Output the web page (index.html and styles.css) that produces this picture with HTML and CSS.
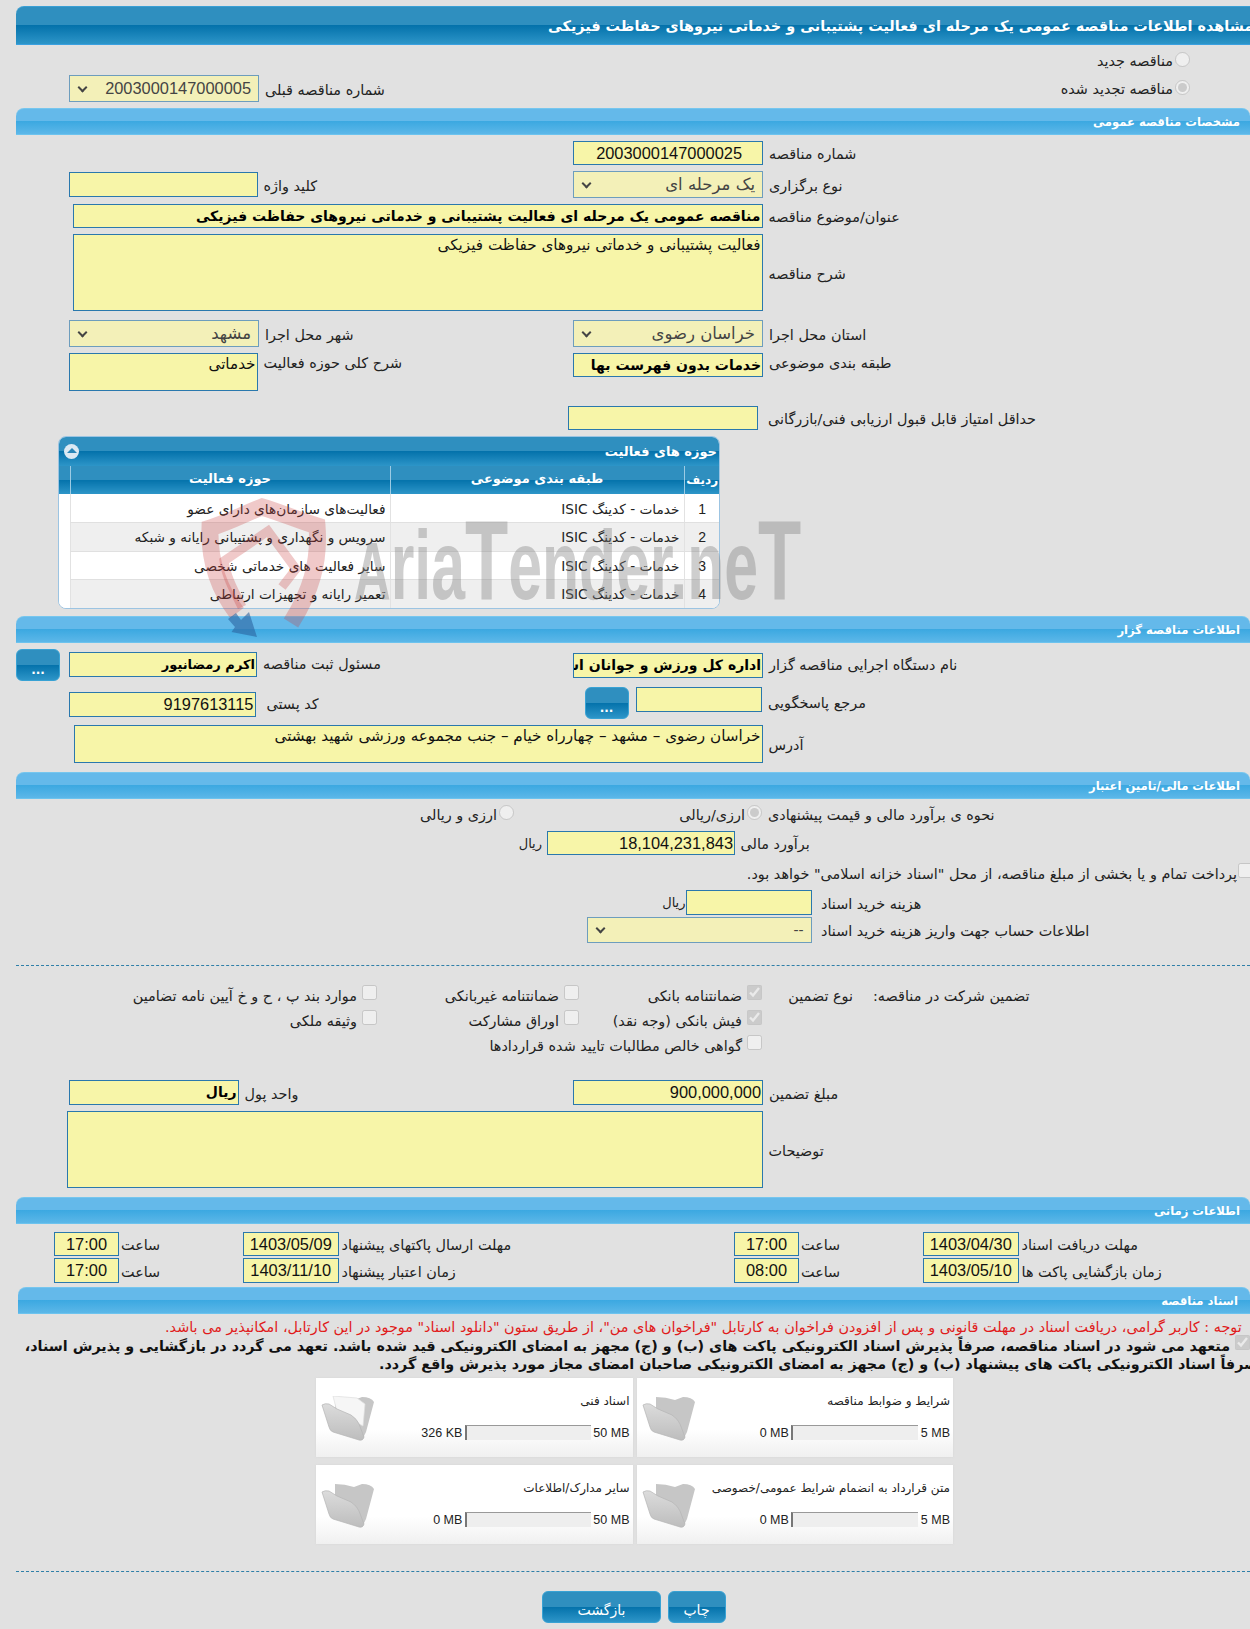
FILE: index.html
```html
<!DOCTYPE html>
<html lang="fa">
<head>
	<meta charset="UTF-8">
	<title>مشاهده اطلاعات مناقصه</title>
	<link rel="stylesheet" href="styles.css">
</head>
<body>
	<div class="titleBar"><span>مشاهده اطلاعات مناقصه عمومی یک مرحله ای فعالیت پشتیبانی و خدماتی نیروهای حفاظت فیزیکی</span></div>

	<div class="radioRow first"><span class="lbl">مناقصه جدید</span><input type="radio" disabled></div>
	<div class="radioRow second">
		<div class="half prev">
			<div class="sel w190 h27"><i class="arrow"></i><span class="num">2003000147000005</span></div>
			<span class="lbl">شماره مناقصه قبلی</span>
		</div>
		<div class="renew"><span class="lbl">مناقصه تجدید شده</span><input type="radio" checked disabled></div>
	</div>

	<!-- general -->
	<div class="bar"><span>مشخصات مناقصه عمومی</span></div>
	<div class="form">
		<div class="row">
			<div class="half"></div>
			<div class="half">
				<div class="fld num w190 h24 center">2003000147000025</div>
				<span class="lbl">شماره مناقصه</span>
			</div>
		</div>
		<div class="row">
			<div class="half">
				<div class="fld w188 h25"></div>
				<span class="lbl">کلید واژه</span>
			</div>
			<div class="half">
				<div class="sel w190 h27"><i class="arrow"></i><span>یک مرحله ای</span></div>
				<span class="lbl">نوع برگزاری</span>
			</div>
		</div>
		<div class="row wide">
			<div class="fld strong wTitle h24">مناقصه عمومی یک مرحله ای فعالیت پشتیبانی و خدماتی نیروهای حفاظت فیزیکی</div>
			<span class="lbl">عنوان/موضوع مناقصه</span>
		</div>
		<div class="row wide">
			<div class="fld area wTitle h77">فعالیت پشتیبانی و خدماتی نیروهای حفاظت فیزیکی</div>
			<span class="lbl">شرح مناقصه</span>
		</div>
		<div class="row gap9">
			<div class="half">
				<div class="sel w190 h27"><i class="arrow"></i><span>مشهد</span></div>
				<span class="lbl">شهر محل اجرا</span>
			</div>
			<div class="half">
				<div class="sel w190 h27"><i class="arrow"></i><span>خراسان رضوی</span></div>
				<span class="lbl">استان محل اجرا</span>
			</div>
		</div>
		<div class="row top">
			<div class="half">
				<div class="fld area w188 h38">خدماتی</div>
				<span class="lbl">شرح کلی حوزه فعالیت</span>
			</div>
			<div class="half">
				<div class="fld strong w190 h24">خدمات بدون فهرست بها</div>
				<span class="lbl">طبقه بندی موضوعی</span>
			</div>
		</div>
		<div class="row gap15 scoreRow">
			<div class="fld w190 h24"></div>
			<span class="lbl">حداقل امتیاز قابل قبول ارزیابی فنی/بازرگانی</span>
		</div>
	</div>

	<div class="panel">
		<div class="panelHead">
			<span class="toggle"><i></i></span>
			<span class="panelTitle">حوزه های فعالیت</span>
		</div>
		<table dir="rtl">
			<thead>
				<tr><th class="colNo">ردیف</th><th class="colCat">طبقه بندی موضوعی</th><th class="colAct">حوزه فعالیت</th><th class="colEnd"></th></tr>
			</thead>
			<tbody>
				<tr><td class="no">1</td><td>خدمات - کدینگ ISIC</td><td>فعالیت‌های سازمان‌های دارای عضو</td><td></td></tr>
				<tr class="alt"><td class="no">2</td><td>خدمات - کدینگ ISIC</td><td>سرویس و نگهداری و پشتیبانی رایانه و شبکه</td><td class="plain"></td></tr>
				<tr><td class="no">3</td><td>خدمات - کدینگ ISIC</td><td>سایر فعالیت های خدماتی شخصی</td><td></td></tr>
				<tr class="alt"><td class="no">4</td><td>خدمات - کدینگ ISIC</td><td>تعمیر رایانه و تجهیزات ارتباطی</td><td class="plain"></td></tr>
			</tbody>
		</table>
	</div>

	<!-- organiser -->
	<div class="bar sec2"><span>اطلاعات مناقصه گزار</span></div>
	<div class="form orgForm">
		<div class="row org">
			<div class="half">
				<button class="btn dots">...</button>
				<div class="fld strong short w188 h25">اکرم رمضانپور</div>
				<span class="lbl">مسئول ثبت مناقصه</span>
			</div>
			<div class="half">
				<div class="fld strong w190 h25">اداره کل ورزش و جوانان استان خراسان رضوی</div>
				<span class="lbl">نام دستگاه اجرایی مناقصه گزار</span>
			</div>
		</div>
		<div class="row org">
			<div class="half">
				<div class="fld num postal h25">9197613115</div>
				<span class="lbl postalLbl">کد پستی</span>
			</div>
			<div class="half answer">
				<button class="btn dots">...</button>
				<div class="fld wRef h25"></div>
				<span class="lbl">مرجع پاسخگویی</span>
			</div>
		</div>
		<div class="row addr">
			<div class="fld area wAddr h38">خراسان رضوی – مشهد – چهارراه خیام – جنب مجموعه ورزشی شهید بهشتی</div>
			<span class="lbl">آدرس</span>
		</div>
	</div>

	<!-- finance -->
	<div class="bar sec3"><span>اطلاعات مالی/تامین اعتبار</span></div>
	<div class="optRow">
		<div class="opt optB"><span class="lbl">ارزی و ریالی</span><input type="radio" disabled></div>
		<div class="opt optA"><span class="lbl">ارزی/ریالی</span><input type="radio" checked disabled></div>
		<span class="lbl optLbl">نحوه ی برآورد مالی و قیمت پیشنهادی</span>
	</div>
	<div class="moneyRow estimate">
		<span class="unit">ریال</span>
		<div class="fld num wEst h24">18,104,231,843</div>
		<span class="lbl">برآورد مالی</span>
	</div>
	<div class="checkRow">
		<span class="lbl">پرداخت تمام و یا بخشی از مبلغ مناقصه، از محل "اسناد خزانه اسلامی" خواهد بود.</span>
		<input type="checkbox" disabled>
	</div>
	<div class="moneyRow cost">
		<span class="unit">ریال</span>
		<div class="fld wCost h25"></div>
		<span class="lbl">هزینه خرید اسناد</span>
	</div>
	<div class="moneyRow account">
		<div class="sel wAcc h26"><i class="arrow"></i><span class="dash">--</span></div>
		<span class="lbl">اطلاعات حساب جهت واریز هزینه خرید اسناد</span>
	</div>

	<div class="dashed firstLine"></div>

	<div class="guarantee">
		<label class="g"><span class="lbl">موارد بند پ ، ح و خ آیین نامه تضامین</span><input type="checkbox" disabled></label>
		<label class="g"><span class="lbl">ضمانتنامه غیربانکی</span><input type="checkbox" disabled></label>
		<label class="g"><span class="lbl">ضمانتنامه بانکی</span><input type="checkbox" checked disabled></label>
		<div class="gHead"><span class="lbl kind">نوع تضمین</span><span class="lbl">تضمین شرکت در مناقصه:</span></div>
		<label class="g"><span class="lbl">وثیقه ملکی</span><input type="checkbox" disabled></label>
		<label class="g"><span class="lbl">اوراق مشارکت</span><input type="checkbox" disabled></label>
		<label class="g"><span class="lbl">فیش بانکی (وجه نقد)</span><input type="checkbox" checked disabled></label>
		<div></div>
		<label class="g wideG"><span class="lbl">گواهی خالص مطالبات تایید شده قراردادها</span><input type="checkbox" disabled></label>
	</div>

	<div class="form amount">
		<div class="row">
			<div class="half">
				<div class="fld strong wUnit h25">ریال</div>
				<span class="lbl">واحد پول</span>
			</div>
			<div class="half">
				<div class="fld num w190 h25">900,000,000</div>
				<span class="lbl">مبلغ تضمین</span>
			</div>
		</div>
		<div class="row note">
			<div class="fld area wNote h77"></div>
			<span class="lbl">توضیحات</span>
		</div>
	</div>

	<!-- dates -->
	<div class="bar sec4"><span>اطلاعات زمانی</span></div>
	<div class="dates">
		<div class="dateRow">
			<div class="dateCell">
				<div class="fld num time h24">17:00</div><span class="lbl timeLbl">ساعت</span>
				<div class="fld num date h24">1403/05/09</div><span class="lbl">مهلت ارسال پاکتهای پیشنهاد</span>
			</div>
			<div class="dateCell">
				<div class="fld num time h24">17:00</div><span class="lbl timeLbl">ساعت</span>
				<div class="fld num date h24">1403/04/30</div><span class="lbl">مهلت دریافت اسناد</span>
			</div>
		</div>
		<div class="dateRow">
			<div class="dateCell">
				<div class="fld num time h25">17:00</div><span class="lbl timeLbl">ساعت</span>
				<div class="fld num date h25">1403/11/10</div><span class="lbl">زمان اعتبار پیشنهاد</span>
			</div>
			<div class="dateCell">
				<div class="fld num time h25">08:00</div><span class="lbl timeLbl">ساعت</span>
				<div class="fld num date h25">1403/05/10</div><span class="lbl">زمان بازگشایی پاکت ها</span>
			</div>
		</div>
	</div>

	<!-- documents -->
	<div class="bar sec5"><span>اسناد مناقصه</span></div>
	<div class="redNote"><span>توجه : کاربر گرامی، دریافت اسناد در مهلت قانونی و پس از افزودن فراخوان به کارتابل "فراخوان های من"، از طریق ستون "دانلود اسناد" موجود در این کارتابل، امکانپذیر می باشد.</span></div>
	<div class="pledge">
		<div class="pledgeLine"><span>متعهد می شود در اسناد مناقصه، صرفاً پذیرش اسناد الکترونیکی پاکت های (ب) و (ج) مجهز به امضای الکترونیکی قید شده باشد. تعهد می گردد در بازگشایی و پذیرش اسناد،</span><input type="checkbox" checked disabled></div>
		<div class="pledgeLine second"><span>صرفاً اسناد الکترونیکی پاکت های پیشنهاد (ب) و (ج) مجهز به امضای الکترونیکی صاحبان امضای مجاز مورد پذیرش واقع گردد.</span></div>
	</div>

	<svg width="0" height="0" class="defs">
		<linearGradient id="flap" x1="0" y1="0" x2="0" y2="1"><stop offset="0" stop-color="#dcdcdc"/><stop offset="1" stop-color="#bdbdbd"/></linearGradient>
		<symbol id="folder" viewBox="0 0 54 46">
			<path d="M14 1 Q24 1 33 4 L41 1 Q50 1 53 6 L45 36 L41 44 L14 22 Z" fill="#c6c6c6"/>
			<path d="M1 9 Q4 7 8 8 L16 13 L30 19 Q36 23 38 28 L43 41 Q42 45 38 44 L12 36 Q9 35 8 31 Z" fill="url(#flap)" stroke="#b4b4b4" stroke-width=".7"/>
		</symbol>
		<symbol id="folderFull" viewBox="0 0 54 46">
			<path d="M14 1 Q24 1 33 4 L41 1 Q50 1 53 6 L45 36 L41 44 L14 22 Z" fill="#c6c6c6"/>
			<path d="M12 0 L36 2 L44 8 L42 30 L16 16 Z" fill="#f6f6f6" stroke="#dedede" stroke-width=".7"/>
			<path d="M1 9 Q4 7 8 8 L16 13 L30 19 Q36 23 38 28 L43 41 Q42 45 38 44 L12 36 Q9 35 8 31 Z" fill="url(#flap)" stroke="#b4b4b4" stroke-width=".7"/>
		</symbol>
	</svg>

	<div class="cards">
		<div class="card">
			<svg class="folder"><use href="#folderFull"/></svg>
			<div class="cardBody">
				<div class="cardTitle">اسناد فنی</div>
				<div class="meter"><span>326 KB</span><div class="track big"></div><span>50 MB</span></div>
			</div>
		</div>
		<div class="card">
			<svg class="folder"><use href="#folder"/></svg>
			<div class="cardBody">
				<div class="cardTitle">شرایط و ضوابط مناقصه</div>
				<div class="meter"><span>0 MB</span><div class="track"></div><span>5 MB</span></div>
			</div>
		</div>
		<div class="card">
			<svg class="folder"><use href="#folder"/></svg>
			<div class="cardBody">
				<div class="cardTitle">سایر مدارک/اطلاعات</div>
				<div class="meter"><span>0 MB</span><div class="track big"></div><span>50 MB</span></div>
			</div>
		</div>
		<div class="card">
			<svg class="folder"><use href="#folder"/></svg>
			<div class="cardBody">
				<div class="cardTitle">متن قرارداد به انضمام شرایط عمومی/خصوصی</div>
				<div class="meter"><span>0 MB</span><div class="track"></div><span>5 MB</span></div>
			</div>
		</div>
	</div>

	<div class="dashed lastLine"></div>

	<div class="actions">
		<button class="btn back">بازگشت</button>
		<button class="btn print">چاپ</button>
	</div>

	<!-- watermark over the page -->
	<svg class="shield" viewBox="0 0 150 150">
		<path d="M47 118 C27 92 19 65 20 33 C42 26 58 17 72 12 C92 18 110 26 127 31 C130 68 120 98 101 128" fill="none" stroke="#c83c3c" stroke-opacity=".28" stroke-width="17"/>
		<path d="M52 112 C42 92 36 80 34 66 L78 36 L106 74 L92 92" fill="none" stroke="#c83c3c" stroke-opacity=".28" stroke-width="9"/>
		<path d="M41.5 137 L67 142 L59 117 L51 125 L46 118 L38 124 L45 132 Z" fill="#2c64a0" fill-opacity=".6"/>
	</svg>
	<div class="mark"><span class="capA">A</span>ria<span class="capT">T</span>ender.ne<span class="capT">T</span></div>
</body>
</html>
```

FILE: styles.css
```css
* {
	box-sizing: border-box;
}

html, body {
	margin: 0;
	padding: 0;
}

body {
	position: relative;
	width: 1250px;
	height: 1629px;
	overflow: hidden;
	background-color: #e1e1e1;
	font-family: "DejaVu Sans", sans-serif;
	font-size: 14.4px;
	color: #222;
}

.lbl {
	direction: rtl;
	white-space: nowrap;
}

input[type="radio"], input[type="checkbox"] {
	flex: none;
	width: 15px;
	height: 15px;
	margin: 0;
}

/* blue bars */
.titleBar {
	display: flex;
	height: 39px;
	margin: 6px 0 0 16px;
	padding: 0 0 0 532px;
	align-items: center;
	border-radius: 8px 0 0 0;
	border-top: 1px solid #3a9fd4;
	border-bottom: 1px solid #3aa0e0;
	background: linear-gradient(#2f8fbf 0, #2f8fbf 50%, #0472ab 50%, #2d95c8 100%);
	color: #fff;
	font-size: 14.4px;
	font-weight: bold;
	white-space: nowrap;
}

.titleBar span {
	direction: rtl;
}

.bar {
	height: 27px;
	margin-left: 16px;
	padding: 2px 10px 0 0;
	border-radius: 8px 8px 0 0;
	border-top: 1px solid #76c6ee;
	border-bottom: 1px solid #6cc3ee;
	background: linear-gradient(#64b9ea 0, #64b9ea 48%, #3ba8e1 48%, #5cb7e8 100%);
	color: #fff;
	font-size: 11.6px;
	font-weight: bold;
	line-height: 22px;
	direction: rtl;
}

.sec2 { margin-top: 7px; }
.sec3 { margin-top: 9px; }
.sec4 { margin-top: 9px; }
.sec5 { margin-top: 4px; margin-left: 18px; padding-right: 12px; }

/* form rows */
.radioRow {
	display: flex;
}

.radioRow.first {
	justify-content: flex-end;
	align-items: flex-start;
	padding: 7px 60px 0 0;
	height: 30px;
}

.radioRow.first .lbl, .renew .lbl {
	margin: 0 2px 0 0;
	line-height: 19px;
}

.radioRow.second {
	height: 33px;
	align-items: flex-start;
}

.prev {
	padding-left: 69px;
	width: 1000px;
}

.renew {
	display: flex;
	flex: 1;
	justify-content: flex-end;
	padding: 5px 60px 0 0;
}

.form {
	padding-top: 6px;
}

.row {
	display: flex;
	align-items: center;
	padding-left: 69px;
	margin-bottom: 6px;
}

.row.top {
	align-items: flex-start;
}

.row.gap9 {
	margin-top: 9px;
}

.row.gap15 {
	margin-top: 15px;
}

.row.wide {
	padding-left: 73px;
}

.scoreRow {
	padding-left: 568px;
	margin-bottom: 0;
}

.half {
	display: flex;
	flex: none;
	width: 504px;
	align-items: center;
}

.row.top .half {
	align-items: flex-start;
}

.row .lbl, .half .lbl {
	margin-left: 6px;
	margin-top: 2px;
}

.scoreRow .lbl {
	margin-left: 10px;
}

.fld {
	flex: none;
	direction: rtl;
	overflow: hidden;
	white-space: nowrap;
	padding: 0 1px;
	border: 1px solid #2a78ad;
	background-color: #f7f5a8;
	color: #111;
	font-size: 15px;
}

.fld.num, .num {
	font-family: "Liberation Sans", sans-serif;
	font-size: 16.4px;
}

.fld.center {
	padding-right: 20px;
}

.fld.strong {
	font-size: 14px;
	font-weight: bold;
	color: #000;
}

.fld.short {
	font-size: 13px;
}

.fld.area {
	font-size: 15.2px;
	line-height: 20px;
}

.sel {
	display: flex;
	flex: none;
	justify-content: space-between;
	align-items: center;
	padding: 0 7px 0 8px;
	border: 1px solid #6d9dbd;
	background-color: #f3f0b8;
	color: #444;
	font-size: 16.5px;
	white-space: nowrap;
}

.sel span {
	direction: rtl;
}

.arrow {
	display: block;
	width: 7px;
	height: 7px;
	margin: -3px 0 0 1px;
	border-right: 2px solid #444;
	border-bottom: 2px solid #444;
	transform: rotate(45deg);
}

.h24 { height: 24px; line-height: 22px; }
.h25 { height: 25px; line-height: 23px; }
.h26 { height: 26px; }
.h27 { height: 27px; }
.h38 { height: 38px; }
.h77 { height: 77px; }

.w188 { width: 188.5px; }
.w190 { width: 190px; }
.wTitle { width: 689.5px; }
.wRef { width: 126.5px; }
.wAddr { width: 688.5px; }
.wEst { width: 188px; }
.wCost { width: 126px; }
.wAcc { width: 224.5px; }
.wUnit { width: 169.5px; }
.wNote { width: 695.5px; }

/* activity panel */
.panel {
	width: 662px;
	height: 173px;
	margin: 6px 0 0 58px;
	border: 1px solid #9cc4e2;
	border-radius: 8px;
	background-color: #fff;
	overflow: hidden;
}

.panelHead {
	display: flex;
	justify-content: space-between;
	align-items: center;
	height: 29px;
	padding: 0 2px 0 5px;
	background: linear-gradient(#2f8fbf 0, #2f8fbf 50%, #0472ab 50%, #2d95c8 100%);
	color: #fff;
}

.panelTitle {
	direction: rtl;
	font-size: 13px;
	font-weight: bold;
}

.toggle {
	display: flex;
	justify-content: center;
	align-items: center;
	width: 15px;
	height: 15px;
	border-radius: 50%;
	background-color: #dbe9f3;
}

.toggle i {
	display: block;
	margin-top: -3px;
	border-left: 5px solid transparent;
	border-right: 5px solid transparent;
	border-bottom: 5px solid #2a86b8;
}

table {
	width: 661px;
	border-collapse: collapse;
	table-layout: fixed;
}

th {
	height: 28px;
	padding: 0 0 3px;
	border-left: 1px solid #9ccbe4;
	background: linear-gradient(#2f8fbf 0, #2f8fbf 50%, #0472ab 50%, #2d95c8 100%);
	color: #fff;
	font-size: 13px;
	font-weight: bold;
}

th.colNo {
	padding: 0;
	font-size: 12px;
}

.colNo { width: 36px; }
.colCat { width: 294px; }
.colAct { width: 320px; }
.colEnd { border-left: 0; }

td {
	height: 28.5px;
	padding: 1px 4px 0;
	border-left: 1px solid #e2e2e2;
	border-bottom: 1px solid #e0e0e0;
	font-size: 13.7px;
	text-align: right;
	white-space: nowrap;
}

td:last-child {
	border-left: 0;
	border-bottom: 0;
	background-color: #fff;
}

td.no {
	font-family: "Liberation Sans", sans-serif;
	font-size: 14px;
	text-align: center;
}

tr.alt td {
	background-color: #efefef;
}

tr.alt td.plain {
	background-color: #fff;
}

/* organiser */
.orgForm .org {
	padding-left: 16px;
	height: 32px;
}

.org .half {
	align-items: flex-start;
}

.org .half:first-child {
	width: 557px;
}

.org .fld, .org .lbl {
	margin-top: 3px;
}

.org .half:last-child .fld, .org .half:last-child .lbl, .answer .fld {
	margin-top: 0;
}

.answer .lbl {
	margin-top: 4px !important;
}

.org .lbl {
	line-height: 25px;
}

.btn {
	flex: none;
	padding: 0;
	border: 1px solid #38a2d4;
	border-radius: 6px;
	background: linear-gradient(#2f8fbf 0, #2f8fbf 50%, #0472ab 50%, #2d95c8 100%);
	color: #fff;
	font-family: "DejaVu Sans", sans-serif;
	cursor: pointer;
}

.dots {
	width: 44px;
	height: 32px;
	padding-top: 9px;
	margin-right: 8.5px;
	font-size: 12px;
	font-weight: bold;
}

.postal {
	width: 186.5px;
	margin-left: 53px;
}

.postalLbl {
	margin-left: 11px !important;
}

.answer {
	padding-left: 11.5px;
}

.answer .dots {
	margin-right: 7px;
}

.row.addr {
	padding-left: 74px;
	margin-bottom: 0;
}

/* finance */
.optRow {
	display: flex;
	height: 32px;
	padding-top: 6px;
}

.opt {
	display: flex;
	justify-content: flex-end;
	align-items: flex-start;
	gap: 2px;
}

.optB { width: 514px; }
.optA { width: 248px; }

.optLbl {
	margin-left: 6px;
	line-height: 20px;
}

.opt .lbl {
	line-height: 20px;
}

.moneyRow {
	display: flex;
	align-items: center;
}

.moneyRow .lbl {
	margin-left: 5.5px;
	margin-top: 2px;
}

.unit {
	direction: rtl;
	margin-right: 5px;
	font-size: 13px;
}

.estimate {
	padding-left: 518px;
}

.estimate .unit {
	width: 24px;
}

.checkRow {
	display: flex;
	justify-content: flex-end;
	align-items: flex-start;
	height: 27px;
	margin: 8px -3px 0 0;
}

.checkRow .lbl {
	line-height: 22px;
	margin-right: 1px;
}

.cost {
	padding-left: 661px;
}

.cost .unit {
	width: 24.5px;
	margin-right: 0;
}

.cost .lbl, .account .lbl {
	margin-left: 9.5px;
}

.account {
	padding-left: 587px;
	margin-top: 2px;
}

.dash {
	font-size: 14px;
}

.dashed {
	margin-left: 16px;
	border-top: 1px dashed #2f7fa8;
}

.firstLine {
	margin-top: 22px;
}

/* guarantee */
.guarantee {
	display: grid;
	grid-template-columns: 377px 202px 183px 1fr;
	grid-auto-rows: 25px;
	margin-top: 19px;
}

.g {
	display: flex;
	justify-content: flex-end;
	gap: 5px;
}

.g .lbl {
	line-height: 22px;
}

.wideG {
	grid-column: 3;
	justify-self: end;
}

.gHead {
	display: flex;
	gap: 20px;
	padding-left: 25px;
}

.gHead .lbl {
	line-height: 22px;
}

.gHead .kind {
	width: 66px;
}

.amount {
	padding-top: 20px;
}

.row.note {
	padding-left: 67px;
	margin-bottom: 0;
}

/* dates */
.dates {
	padding: 8px 0 0 54px;
}

.dateRow {
	display: flex;
	margin-bottom: 2px;
}

.dateCell {
	display: flex;
	flex: none;
	width: 680px;
	align-items: center;
}

.dateCell .lbl {
	margin-top: 2px;
}

.time { width: 65px; text-align: center; }
.date { width: 95.5px; text-align: center; }

.timeLbl {
	width: 124px;
	padding-left: 2px;
	text-align: left;
}

.dateCell .lbl:last-child {
	margin-left: 3px;
}

/* documents */
.redNote {
	display: flex;
	height: 20px;
	padding: 3px 0 0 165px;
	color: #e01b1b;
	white-space: nowrap;
}

.redNote span {
	direction: rtl;
	flex: none;
	line-height: 20px;
}

.pledge {
	margin-top: 1px;
	font-size: 14.3px;
	font-weight: bold;
	color: #111;
}

.pledgeLine {
	display: flex;
	justify-content: flex-end;
	align-items: flex-start;
	height: 18px;
	white-space: nowrap;
}

.pledgeLine span {
	direction: rtl;
	flex: none;
	line-height: 18px;
	margin-right: 5px;
	margin-top: 2px;
}

.pledgeLine.second {
	padding-left: 379px;
	justify-content: flex-start;
}

.defs {
	position: absolute;
}

.cards {
	display: grid;
	grid-template-columns: 316.5px 316.5px;
	grid-auto-rows: 79px;
	gap: 8px 4px;
	margin: 7px 0 0 316px;
}

.card {
	display: flex;
	background: linear-gradient(#fff 0, #fff 65%, #f0f0f0 100%);
	box-shadow: 0 0 2px #d6d6d6;
}

.folder {
	flex: none;
	width: 54px;
	height: 46px;
	margin: 18px 0 0 5px;
}

.cardBody {
	flex: 1;
	padding: 13px 3px 0 0;
	color: #222;
}

.cardTitle {
	direction: rtl;
	height: 20px;
	line-height: 20px;
	font-size: 12px;
}

.meter {
	display: flex;
	justify-content: flex-end;
	align-items: center;
	gap: 2.5px;
	margin-top: 14px;
	font-family: "Liberation Sans", sans-serif;
	font-size: 12.5px;
}

.track {
	width: 127px;
	height: 15px;
	border-top: 1px solid #999;
	border-left: 2px solid #777;
	background-color: #eee;
}

.track.big {
	width: 126px;
}

.lastLine {
	margin-top: 27px;
}

.actions {
	display: flex;
	gap: 6.5px;
	margin: 19px 0 0 542px;
}

.back, .print {
	height: 32px;
	padding-top: 5px;
	font-size: 14px;
}

.back { width: 119px; }
.print { width: 58px; }

/* watermark */
.shield {
	position: absolute;
	left: 190px;
	top: 495px;
	width: 150px;
	height: 150px;
	pointer-events: none;
}

.mark {
	position: absolute;
	left: 354px;
	top: 502px;
	width: 800px;
	height: 115px;
	color: #808080;
	opacity: .38;
	font-family: "Liberation Sans", sans-serif;
	font-size: 98px;
	font-weight: bold;
	line-height: 115px;
	white-space: nowrap;
	transform: scaleX(.62);
	transform-origin: left top;
	pointer-events: none;
}

.capA { font-size: 82px; }
.capT { font-size: 114px; }
```
